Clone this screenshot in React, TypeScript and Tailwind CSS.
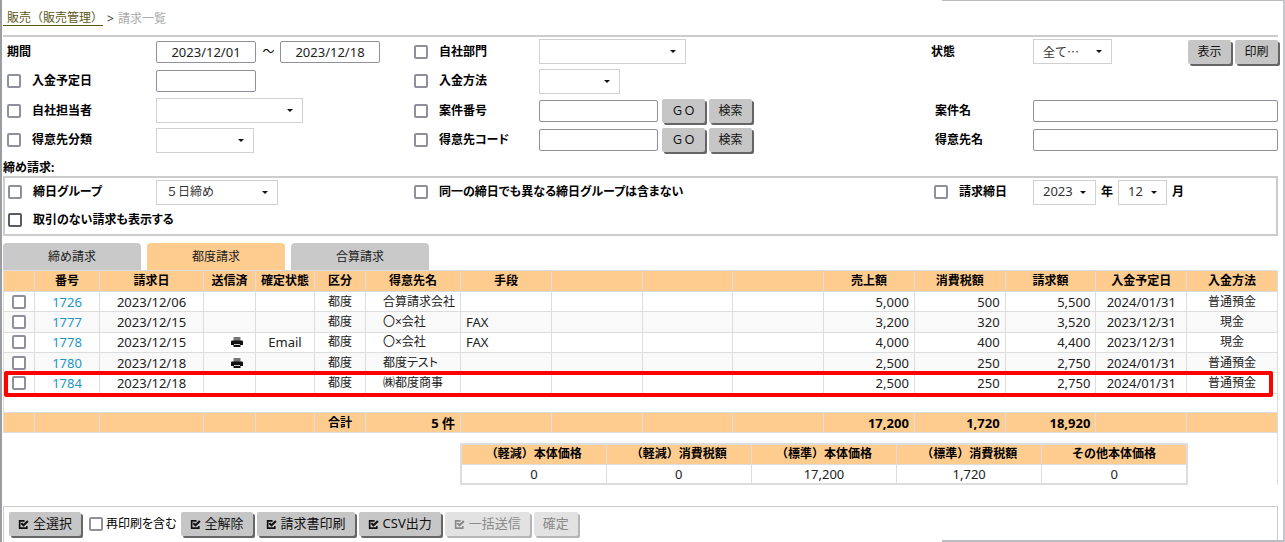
import React from 'react';

const FILTER_GRID =
  'grid grid-cols-[153px_minmax(0,258fr)_125px_minmax(0,392fr)_102px_minmax(0,245fr)]';
const PANEL_GRID =
  'grid grid-cols-[151px_minmax(0,258fr)_119px_minmax(0,401fr)_99px_minmax(0,243fr)]';

const KANA = "[font-feature-settings:'palt'] ";

function Check({ id, label, dark }: { id: string; label?: string; dark?: boolean }) {
  return (
    <input
      id={id}
      type="checkbox"
      aria-label={label}
      className={
        'size-[14px] shrink-0 appearance-none rounded-[2px] border-2 bg-white checked:bg-[#0060df] ' +
        (dark ? 'border-[#5b5b66]' : 'border-[#8f8f9d]')
      }
    />
  );
}

function CheckLabel({ id, children, dark }: { id: string; children: React.ReactNode; dark?: boolean }) {
  return (
    <div className="flex items-center gap-[11px] whitespace-nowrap">
      <Check id={id} dark={dark} />
      <label htmlFor={id} className={KANA + 'font-bold'}>
        {children}
      </label>
    </div>
  );
}

function Select({ label, className, options = [''] }: { label: string; className: string; options?: string[] }) {
  return (
    <div className={'relative h-[25px] shrink-0 ' + className}>
      <select
        aria-label={label}
        className="size-full appearance-none border border-[#d0d0d0] bg-white pl-[9px] text-[#333]"
      >
        {options.map((o) => (
          <option key={o}>{o}</option>
        ))}
      </select>
      <svg viewBox="0 0 6 3" className="pointer-events-none absolute top-[11px] right-[10px] h-[3px] w-[6px]" aria-hidden="true">
        <path d="M0 0h6L3 3z" fill="#111" />
      </svg>
    </div>
  );
}

function TextBox({ label, className, value }: { label: string; className: string; value?: string }) {
  return (
    <input
      type="text"
      aria-label={label}
      defaultValue={value}
      className={'h-[22px] rounded-[2px] border border-[#8f8f9d] bg-white text-[13px] text-[#222] ' + className}
    />
  );
}

function SmallButton({ children }: { children: React.ReactNode }) {
  return (
    <button
      type="button"
      className="h-6 w-[43px] shrink-0 rounded-[2px] bg-[#c6c6c6] text-xs text-[#111] shadow-[2px_2px_0_#666]"
    >
      {children}
    </button>
  );
}

function CheckIcon() {
  return (
    <svg viewBox="0 0 20 20" className="size-[11px]" fill="none" aria-hidden="true">
      <path d="M12 3.5H3v13h13v-4" stroke="currentColor" strokeWidth="3" />
      <path d="M6 7.5l4 4 8-8" stroke="currentColor" strokeWidth="3.8" />
    </svg>
  );
}

function PrinterIcon() {
  return (
    <svg viewBox="0 0 12 12" className="ml-[27px] size-3" aria-hidden="true">
      <path d="M2.5 1h7v4h-7z" fill="#777" />
      <path d="M1 4.5h10a1 1 0 0 1 1 1V9H0V5.500a1 1 0 0 1 1-1z" fill="#111" />
      <path d="M2.500 8h7v3h-7z" fill="#111" />
      <path d="M3 8h6v1H3z" fill="#ccc" />
    </svg>
  );
}

function ActionButton({ children, icon = true, disabled }: { children: React.ReactNode; icon?: boolean; disabled?: boolean }) {
  return (
    <button
      type="button"
      disabled={disabled}
      className={
        'flex h-6 items-center gap-1 rounded-[2px] px-[9px] text-[13px] whitespace-nowrap ' +
        (disabled
          ? 'bg-[#e2e2e2] text-[#8a8a8a] shadow-[2px_2px_0_#b5b5b5]'
          : 'bg-[#c6c6c6] text-[#111] shadow-[2px_2px_0_#666]')
      }
    >
      {icon && <CheckIcon />}
      {children}
    </button>
  );
}

type Row = {
  no: string;
  date: string;
  printed?: boolean;
  status?: string;
  name: string;
  means?: string;
  sales: string;
  tax: string;
  total: string;
  due: string;
  method: string;
  marked?: boolean;
};

const ROWS: Row[] = [
  { no: '1726', date: '2023/12/06', name: '合算請求会社', sales: '5,000', tax: '500', total: '5,500', due: '2024/01/31', method: '普通預金' },
  { no: '1777', date: '2023/12/15', name: '〇×会社', means: 'FAX', sales: '3,200', tax: '320', total: '3,520', due: '2023/12/31', method: '現金' },
  { no: '1778', date: '2023/12/15', printed: true, status: 'Email', name: '〇×会社', means: 'FAX', sales: '4,000', tax: '400', total: '4,400', due: '2023/12/31', method: '現金' },
  { no: '1780', date: '2023/12/18', printed: true, name: '都度テスト', sales: '2,500', tax: '250', total: '2,750', due: '2024/01/31', method: '普通預金' },
  { no: '1784', date: '2023/12/18', name: '㈱都度商事', sales: '2,500', tax: '250', total: '2,750', due: '2024/01/31', method: '普通預金', marked: true },
];

const HEADERS = ['', '番号', '請求日', '送信済', '確定状態', '区分', '得意先名', '手段', '', '', '', '売上額', '消費税額', '請求額', '入金予定日', '入金方法'];
const TOTALS = ['', '', '', '', '', '合計', '5 件', '', '', '', '', '17,200', '1,720', '18,920', '', ''];

const SUMMARY = [
  ['（軽減）本体価格', '0'],
  ['（軽減）消費税額', '0'],
  ['（標準）本体価格', '17,200'],
  ['（標準）消費税額', '1,720'],
  ['その他本体価格', '0'],
];

const CELL = 'border border-[#ddd] p-0 leading-4 ';

function InvoiceTable() {
  return (
    <table className="h-[163px] w-full table-fixed border-collapse text-center text-xs whitespace-nowrap text-[#222]">
      <colgroup>
        <col className="w-[31px]" />
        <col className="w-[65px]" />
        <col className="w-[104px]" />
        <col className="w-[52px]" />
        <col className="w-[59px]" />
        <col className="w-[51px]" />
        <col className="w-[95px]" />
        <col span={9} />
      </colgroup>
      <thead>
        <tr className="h-[21px] bg-[#ffcc90] text-black">
          {HEADERS.map((h, i) => (
            <th key={i} className={CELL + 'font-bold'}>
              {h}
            </th>
          ))}
        </tr>
      </thead>
      <tbody>
        {ROWS.map((r) => (
          <tr key={r.no} className="relative h-5 even:bg-[#f9f9f9]">
            <td className={CELL}>
              <div className="flex justify-center">
                <Check id={'row-' + r.no} label={r.no} />
              </div>
              {r.marked && (
                <span className="pointer-events-none absolute -top-[2px] right-[5px] -bottom-[4px] left-0 rounded-[2px] border-4 border-[#f00]" />
              )}
            </td>
            <td className={CELL + 'text-[13px]'}>
              <a href="#" className="text-[#2196c3]">
                {r.no}
              </a>
            </td>
            <td className={CELL + 'text-[13px]'}>{r.date}</td>
            <td className={CELL}>{r.printed && <PrinterIcon />}</td>
            <td className={CELL + 'text-[13px]'}>{r.status}</td>
            <td className={CELL}>都度</td>
            <td className={CELL + KANA + 'pl-[17px] text-left'}>{r.name}</td>
            <td className={CELL + 'pl-[5px] text-left text-[13px]'}>{r.means}</td>
            <td className={CELL} />
            <td className={CELL} />
            <td className={CELL} />
            <td className={CELL + 'pr-[5px] text-right text-[13px]'}>{r.sales}</td>
            <td className={CELL + 'pr-[5px] text-right text-[13px]'}>{r.tax}</td>
            <td className={CELL + 'pr-[5px] text-right text-[13px]'}>{r.total}</td>
            <td className={CELL + 'text-[13px]'}>{r.due}</td>
            <td className={CELL}>{r.method}</td>
          </tr>
        ))}
        <tr className="h-[19px]">
          <td colSpan={16} className="border border-[#ddd] p-0 leading-4" />
        </tr>
      </tbody>
      <tfoot>
        <tr className="h-5 bg-[#ffcc90] text-black">
          {TOTALS.map((t, i) => (
            <td key={i} className={CELL + 'font-bold ' + (i === 5 ? '' : 'pr-[5px] text-right text-[13px]')}>
              {t}
            </td>
          ))}
        </tr>
      </tfoot>
    </table>
  );
}

export default function App() {
  return (
    <div
      lang="ja"
      className="relative flex min-h-screen flex-col border-r-2 border-l-2 border-r-[#c3c6cc] border-l-[#9a9da2] bg-white pr-[5px] pl-px font-['Noto_Sans','Noto_Sans_CJK_JP',sans-serif] text-xs text-black"
    >
      <div className="absolute top-0 right-0 h-px w-[341px] bg-[#b9bcc1]" />
      <div className="absolute right-0 bottom-0 h-[2px] w-[341px] bg-[#b9bcc1]" />

      <nav className="flex h-[35px] items-center gap-1 pt-[2px] text-[#333]">
        <a href="#" className="border-b border-[#5c5717] pl-1 leading-[14px] text-[#5c5717]">
          販売（販売管理）
        </a>
        <span>&gt;</span>
        <span className="text-[#aaa]">請求一覧</span>
      </nav>

      <section className={FILTER_GRID + ' h-[120px] grid-rows-4 items-center border-t-2 border-[#ccc]'}>
        <div className="pl-1 font-bold">期間</div>
        <div className="flex items-center">
          <TextBox label="期間 開始" value="2023/12/01" className="w-[100px] text-center" />
          <span className="w-6 pl-px text-center">～</span>
          <TextBox label="期間 終了" value="2023/12/18" className="w-[100px] text-center" />
        </div>
        <CheckLabel id="dept">自社部門</CheckLabel>
        <Select label="自社部門" className="w-[147px]" />
        <div className="font-bold">状態</div>
        <div className="flex items-center">
          <Select label="状態" className="w-[79px] font-['Noto_Sans_CJK_JP',sans-serif]" options={['全て…']} />
          <div className="ml-auto flex gap-1">
            <SmallButton>表示</SmallButton>
            <SmallButton>印刷</SmallButton>
          </div>
        </div>

        <div className="pl-1">
          <CheckLabel id="due">入金予定日</CheckLabel>
        </div>
        <TextBox label="入金予定日" className="w-[100px]" />
        <CheckLabel id="method">入金方法</CheckLabel>
        <Select label="入金方法" className="w-[81px]" />
        <div />
        <div />

        <div className="pl-1">
          <CheckLabel id="staff">自社担当者</CheckLabel>
        </div>
        <Select label="自社担当者" className="w-[147px]" />
        <CheckLabel id="caseNo">案件番号</CheckLabel>
        <div className="flex items-center gap-1">
          <TextBox label="案件番号" className="w-[119px]" />
          <SmallButton>ＧＯ</SmallButton>
          <SmallButton>検索</SmallButton>
        </div>
        <label htmlFor="caseName" className="pl-1 font-bold">
          案件名
        </label>
        <input id="caseName" type="text" className="h-[22px] w-full rounded-[2px] border border-[#8f8f9d]" />

        <div className="pl-1">
          <CheckLabel id="class">得意先分類</CheckLabel>
        </div>
        <Select label="得意先分類" className="w-[98px]" />
        <CheckLabel id="code">得意先コード</CheckLabel>
        <div className="flex items-center gap-1">
          <TextBox label="得意先コード" className="w-[119px]" />
          <SmallButton>ＧＯ</SmallButton>
          <SmallButton>検索</SmallButton>
        </div>
        <label htmlFor="custName" className="pl-1 font-bold">
          得意先名
        </label>
        <input id="custName" type="text" className="h-[22px] w-full rounded-[2px] border border-[#8f8f9d]" />
      </section>

      <h2 className={KANA + 'flex h-[21px] items-center pt-[5px] font-bold'}>締め請求:</h2>
      <section className={PANEL_GRID + ' h-[60px] grid-rows-2 items-center border-2 border-[#ccc]'}>
        <div className="pl-[3px]">
          <CheckLabel id="group">締日グループ</CheckLabel>
        </div>
        <Select label="締日グループ" className="w-[122px]" options={['５日締め']} />
        <div className="col-span-2">
          <CheckLabel id="exclude">同一の締日でも異なる締日グループは含まない</CheckLabel>
        </div>
        <CheckLabel id="closing">請求締日</CheckLabel>
        <div className="flex items-center gap-[5px] font-bold">
          <Select label="年" className="w-[63px] text-[13px] font-normal" options={['2023']} />
          <span>年</span>
          <Select label="月" className="w-[49px] text-[13px] font-normal" options={['12']} />
          <span>月</span>
        </div>
        <div className="col-span-6 pl-[3px]">
          <CheckLabel id="noTrade" dark>
            取引のない請求も表示する
          </CheckLabel>
        </div>
      </section>

      <div role="tablist" className="mt-[7px] flex gap-[6px]">
        {['締め請求', '都度請求', '合算請求'].map((t, i) => (
          <button
            key={t}
            type="button"
            role="tab"
            aria-selected={i === 1}
            className={'h-[27px] w-[138px] rounded-t-[4px] text-[#222] ' + (i === 1 ? 'bg-[#ffcc90]' : 'bg-[#c9c9c9]')}
          >
            {t}
          </button>
        ))}
      </div>

      <InvoiceTable />
      <div className="flex border-r border-[#ddd] pt-[10px] pr-[89px] pl-[457px]">
        <table className="w-full table-fixed border-collapse border-2 border-[#ddd] text-center whitespace-nowrap text-[#222]">
          <thead>
            <tr className="bg-[#ffcc90] text-black">
              {SUMMARY.map(([h]) => (
                <th key={h} className="h-5 border border-[#ddd] p-0 leading-4">
                  {h}
                </th>
              ))}
            </tr>
          </thead>
          <tbody>
            <tr>
              {SUMMARY.map(([h, v]) => (
                <td key={h} className="h-5 border border-[#ddd] p-0 text-[13px] leading-4">
                  {v}
                </td>
              ))}
            </tr>
          </tbody>
        </table>
      </div>

      <footer className="mt-[21px] flex flex-1 items-start gap-1 border border-b-0 border-[#ccc] pt-[5px] pl-[5px]">
        <ActionButton>全選択</ActionButton>
        <div className="flex h-6 items-center gap-[3px] pl-1">
          <Check id="reprint" />
          <label htmlFor="reprint" className={KANA}>
            再印刷を含む
          </label>
        </div>
        <ActionButton>全解除</ActionButton>
        <ActionButton>請求書印刷</ActionButton>
        <ActionButton>CSV出力</ActionButton>
        <ActionButton disabled>一括送信</ActionButton>
        <ActionButton disabled icon={false}>
          確定
        </ActionButton>
      </footer>
    </div>
  );
}
